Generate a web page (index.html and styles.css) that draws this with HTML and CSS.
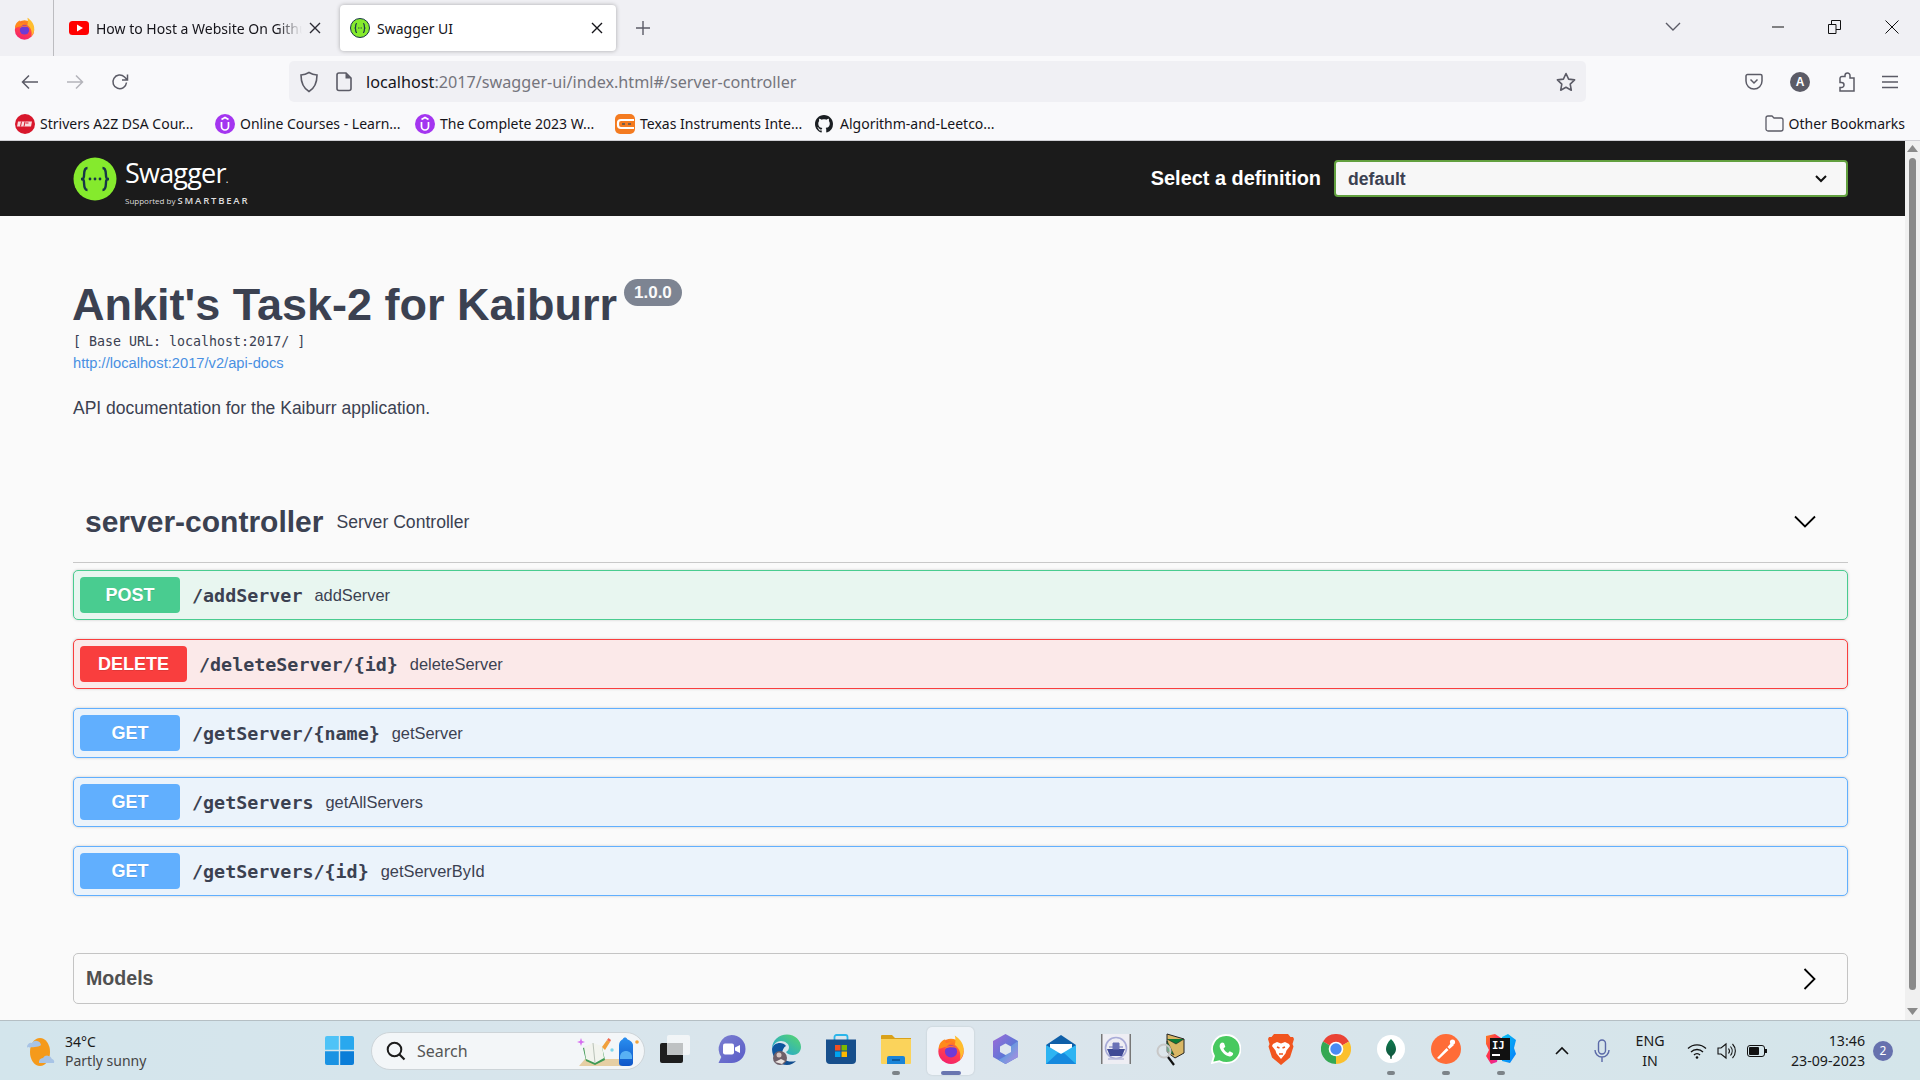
FILE: index.html
```html
<!DOCTYPE html>
<html lang="en">
<head>
  <meta charset="UTF-8">
  <meta name="viewport" content="width=device-width, initial-scale=1.0">
  <title>Swagger UI</title>
  <link rel="stylesheet" href="styles.css">
</head>
<body>

<!-- shared gradients and icons -->
<svg class="defs" width="0" height="0">
  <defs>
    <linearGradient id="ff-body" x1="0.7" y1="0" x2="0.3" y2="1"><stop offset="0" stop-color="#ff980e"/><stop offset="0.55" stop-color="#ff3d4f"/><stop offset="1" stop-color="#f3206e"/></linearGradient>
    <linearGradient id="edge-top" x1="0" y1="1" x2="1" y2="0"><stop offset="0" stop-color="#1b9de2"/><stop offset="1" stop-color="#5ad86a"/></linearGradient>
    <linearGradient id="edge-low" x1="0" y1="0" x2="1" y2="1"><stop offset="0" stop-color="#0c59a4"/><stop offset="1" stop-color="#114a8b"/></linearGradient>
    <linearGradient id="teams-fill" x1="0" y1="0" x2="1" y2="1"><stop offset="0" stop-color="#7b7fd0"/><stop offset="1" stop-color="#5a5cc8"/></linearGradient>
    <linearGradient id="m365-a" x1="0" y1="0" x2="1" y2="1"><stop offset="0" stop-color="#a06bd8"/><stop offset="1" stop-color="#2f7fd6"/></linearGradient>
    <linearGradient id="m365-b" x1="0" y1="0" x2="1" y2="1"><stop offset="0" stop-color="#2aa7de"/><stop offset="1" stop-color="#b78ae0"/></linearGradient>
    <linearGradient id="pack" x1="0" y1="0" x2="0" y2="1"><stop offset="0" stop-color="#2a8ff0"/><stop offset="1" stop-color="#0f56c8"/></linearGradient>
    <linearGradient id="leaf" x1="0" y1="0" x2="0" y2="1"><stop offset="0" stop-color="#0f7a4e"/><stop offset="1" stop-color="#12523c"/></linearGradient>
    <linearGradient id="ij-a" x1="0" y1="0" x2="1" y2="1"><stop offset="0" stop-color="#fc801d"/><stop offset="0.5" stop-color="#fe2857"/><stop offset="1" stop-color="#dd2bc7"/></linearGradient>
    <linearGradient id="ij-b" x1="0" y1="0" x2="1" y2="1"><stop offset="0" stop-color="#07c3f2"/><stop offset="1" stop-color="#087cfa"/></linearGradient>
    <symbol id="firefox" viewBox="0 0 32 32">
      <circle cx="16" cy="18" r="13.500" fill="url(#ff-body)"/>
      <path d="M20 1c5 3 9 8 9.500 14 .3 5-1 9-4 12 1-5 1-11-5.500-16 1-3 1-7 0-10z" fill="#ffbd2e"/>
      <path d="M2.800 15C3 10 6 6 10 5c-1 2 0 3 1 4 2-1 5-1 7 0-3 0-6 2-6 4-4 0-8 3-9.200 2z" fill="#ff8a1c"/>
      <circle cx="16" cy="18" r="6.500" fill="#6e3ad6"/>
      <path d="M9 15.500c2-4 10-5 14-.5-5-2-9-2-14 .5z" fill="#ff7139"/>
    </symbol>
    <symbol id="udemy" viewBox="0 0 20 20">
      <circle cx="10" cy="10" r="10" fill="#a435f0"/>
      <path d="M6.500 8v4.500a3.500 3.500 0 0 0 7 0V8M6.500 5.500L10 3.500l3.500 2" fill="none" stroke="#fff" stroke-width="1.700"/>
    </symbol>
  </defs>
</svg>

<!-- Browser tabs -->
<div class="tabbar">
  <div class="ff-slot">
    <svg width="23" height="25"><use href="#firefox"/></svg>
  </div>
  <div class="tab tab-bg">
    <svg class="tab-icon" width="20" height="14" viewBox="0 0 20 14"><rect width="20" height="14" rx="3.500" fill="#f00"/><path d="M8 3.500v7l6-3.500z" fill="#fff"/></svg>
    <span class="tab-title tab-fade">How to Host a Website On Github</span>
    <svg class="tab-close" width="14" height="14" viewBox="0 0 14 14"><path d="M2 2l10 10M12 2L2 12" stroke="#2b2a33" stroke-width="1.400"/></svg>
  </div>
  <div class="tab tab-active">
    <svg class="tab-icon" width="20" height="20" viewBox="0 0 20 20"><circle cx="10" cy="10" r="9.500" fill="#85ea2d" stroke="#173647"/><path d="M7 5.500c-2 0-1 3-1.500 4-.2.400-.5.500-1 .5.500 0 .8.100 1 .5.500 1-.5 4 1.500 4M13 5.500c2 0 1 3 1.500 4 .2.400.5.500 1 .5-.5 0-.8.100-1 .5-.5 1 .5 4-1.500 4" fill="none" stroke="#173647" stroke-width="1.200"/><path d="M8 10h.8M9.600 10h.8M11.200 10h.8" stroke="#173647" stroke-width="1.200"/></svg>
    <span class="tab-title">Swagger UI</span>
    <svg class="tab-close" width="14" height="14" viewBox="0 0 14 14"><path d="M2 2l10 10M12 2L2 12" stroke="#15141a" stroke-width="1.400"/></svg>
  </div>
  <svg class="new-tab" width="16" height="16" viewBox="0 0 16 16"><path d="M8 1v14M1 8h14" stroke="#5b5b66" stroke-width="1.400"/></svg>
  <div class="tabbar-right">
    <svg class="all-tabs" width="16" height="10" viewBox="0 0 16 10"><path d="M1 1l7 7 7-7" fill="none" stroke="#5b5b66" stroke-width="1.400"/></svg>
    <div class="win-btn"><svg width="12" height="2" viewBox="0 0 12 2"><path d="M0 1h12" stroke="#111" stroke-width="1"/></svg></div>
    <div class="win-btn"><svg width="13" height="14" viewBox="0 0 13 14"><path d="M.5 4.500h7.500v9H.5zM3.500 4.500V.5H12.500v9H8" fill="none" stroke="#111"/></svg></div>
    <div class="win-btn"><svg width="14" height="14" viewBox="0 0 14 14"><path d="M.5.500l13 13M13.500.500l-13 13" stroke="#111"/></svg></div>
  </div>
</div>

<!-- Address bar -->
<div class="toolbar">
  <div class="nav-btn"><svg width="18" height="16" viewBox="0 0 18 16"><path d="M17 8H2M8 1.500L1.500 8 8 14.500" fill="none" stroke="#5b5b66" stroke-width="1.500"/></svg></div>
  <div class="nav-btn"><svg width="18" height="16" viewBox="0 0 18 16"><path d="M1 8h15M10 1.500L16.500 8 10 14.500" fill="none" stroke="#b4b4ba" stroke-width="1.500"/></svg></div>
  <div class="nav-btn"><svg width="18" height="18" viewBox="0 0 18 18"><path d="M15.500 9.500A6.800 6.800 0 1 1 13.500 4L16 6.500M16.500 1.500v5.500H11" fill="none" stroke="#5b5b66" stroke-width="1.500"/></svg></div>
  <div class="urlbar">
    <svg class="url-shield" width="20" height="22" viewBox="0 0 20 22"><path d="M10 1.500c2.500 1.500 5 2.300 8 2.500 0 7-2 13-8 16.500C4 17 2 11 2 4c3-.2 5.500-1 8-2.500z" fill="none" stroke="#5b5b66" stroke-width="1.600"/></svg>
    <svg class="url-page" width="16" height="20" viewBox="0 0 16 20"><path d="M3 1h7l5 5v10.500a2 2 0 0 1-2 2H3a2 2 0 0 1-2-2V3a2 2 0 0 1 2-2z" fill="none" stroke="#5b5b66" stroke-width="1.600"/><path d="M9.500 1v5.500H15" fill="#5b5b66"/></svg>
    <span class="url-text"><span class="url-host">localhost</span>:2017/swagger-ui/index.html#/server-controller</span>
    <svg class="url-star" width="20" height="20" viewBox="0 0 20 20"><path d="M10 1.500l2.600 5.600 6 .8-4.400 4.200 1.100 6.100L10 15.200l-5.300 3 1.100-6.100L1.400 7.900l6-.8z" fill="none" stroke="#5b5b66" stroke-width="1.600" stroke-linejoin="round"/></svg>
  </div>
  <div class="tool-icons">
    <svg width="18" height="18" viewBox="0 0 18 18"><path d="M2.500 1.500h13a1.500 1.500 0 0 1 1.500 1.500v5a8 8 0 0 1-16 0V3a1.500 1.500 0 0 1 1.500-1.500z" fill="none" stroke="#5b5b66" stroke-width="1.500"/><path d="M5.500 6.500L9 10l3.500-3.500" fill="none" stroke="#5b5b66" stroke-width="1.500"/></svg>
    <div class="avatar">A</div>
    <svg width="18" height="20" viewBox="0 0 18 20"><path d="M8 4.500V3.500a2.500 2.500 0 1 1 5 0V6h4v13H3v-3.500h1.500a2.500 2.500 0 1 0 0-5H3V6.500a2 2 0 0 1 2-2z" fill="none" stroke="#5b5b66" stroke-width="1.500"/></svg>
    <svg width="16" height="14" viewBox="0 0 16 14"><path d="M0 1.500h16M0 7h16M0 12.500h16" stroke="#5b5b66" stroke-width="1.500"/></svg>
  </div>
</div>

<!-- Bookmarks -->
<div class="bookmarks">
  <div class="bm">
    <svg width="20" height="20" viewBox="0 0 20 20"><circle cx="10" cy="10" r="10" fill="#d8172c"/><path d="M3 7.500h14l-1 5H2z" fill="#fff" opacity=".85"/><path d="M6.500 7.500l-1 5M10 7.500l-1 5M13.500 9h-3" stroke="#d8172c"/></svg>
    <span>Strivers A2Z DSA Cour...</span>
  </div>
  <div class="bm">
    <svg width="20" height="20"><use href="#udemy"/></svg>
    <span>Online Courses - Learn...</span>
  </div>
  <div class="bm">
    <svg width="20" height="20"><use href="#udemy"/></svg>
    <span>The Complete 2023 W...</span>
  </div>
  <div class="bm">
    <svg width="20" height="20" viewBox="0 0 20 20"><rect width="20" height="20" rx="5" fill="#f47b20"/><path d="M19 6H6a3 3 0 0 0-3 3v2a3 3 0 0 0 3 3h13" fill="none" stroke="#fff" stroke-width="2.200"/><path d="M7 10h3M13 10h3" stroke="#555" stroke-width="1.600"/></svg>
    <span>Texas Instruments Inte...</span>
  </div>
  <div class="bm bm-git">
    <svg width="18" height="18" viewBox="0 0 16 16"><path fill="#1b1f23" d="M8 0C3.580 0 0 3.580 0 8c0 3.540 2.290 6.530 5.470 7.590.4.070.55-.17.55-.38 0-.19-.01-.82-.01-1.490-2.010.37-2.530-.49-2.690-.94-.09-.23-.48-.94-.82-1.130-.28-.15-.68-.52-.01-.53.63-.01 1.080.58 1.230.82.720 1.210 1.870.87 2.330.66.070-.52.280-.87.510-1.070-1.780-.2-3.640-.89-3.640-3.950 0-.87.310-1.590.820-2.150-.080-.2-.360-1.020.080-2.120 0 0 .670-.21 2.200.820.640-.180 1.320-.270 2-.270s1.360.090 2 .270c1.530-1.040 2.200-.820 2.200-.820.440 1.100.160 1.920.080 2.120.510.560.820 1.270.820 2.150 0 3.070-1.870 3.750-3.650 3.950.290.250.540.730.540 1.480 0 1.070-.010 1.930-.010 2.200 0 .210.150.460.550.380A8.010 8.010 0 0 0 16 8c0-4.420-3.580-8-8-8z"/></svg>
    <span>Algorithm-and-Leetco...</span>
  </div>
  <div class="bm bm-other">
    <svg width="19" height="17" viewBox="0 0 19 17"><path d="M1 3a2 2 0 0 1 2-2h4l2 2h7a2 2 0 0 1 2 2v9a2 2 0 0 1-2 2H3a2 2 0 0 1-2-2z" fill="none" stroke="#5b5b66" stroke-width="1.300"/></svg>
    <span>Other Bookmarks</span>
  </div>
</div>

<div class="page">
  <div class="page-main">

    <div class="topbar">
      <div class="logo">
        <svg width="44" height="44" viewBox="0 0 44 44"><circle cx="22" cy="22" r="21.500" fill="#85ea2d"/><path d="M14.500 11c-5 0-2.500 8-4 10-.5.600-1.200 1-2.500 1 1.300 0 2 .4 2.500 1 1.500 2-1 10 4 10M29.500 11c5 0 2.500 8 4 10 .5.600 1.200 1 2.500 1-1.300 0-2 .4-2.500 1-1.500 2 1 10-4 10" fill="none" stroke="#173647" stroke-width="2.400"/><circle cx="17" cy="22" r="1.400" fill="#173647"/><circle cx="22" cy="22" r="1.400" fill="#173647"/><circle cx="27" cy="22" r="1.400" fill="#173647"/></svg>
        <div class="logo-text">
          <div class="logo-name">Swagger<small>.</small></div>
          <div class="logo-sub">Supported by <b>SMARTBEAR</b></div>
        </div>
      </div>
      <div class="def-select">
        <label>Select a definition</label>
        <div class="select-box">
          <span>default</span>
          <svg width="14" height="10" viewBox="0 0 14 10"><path d="M2 2l5 5 5-5" fill="none" stroke="#111" stroke-width="2"/></svg>
        </div>
      </div>
    </div>

    <div class="content">
      <div class="info">
        <div class="title-row">
          <h1>Ankit's Task-2 for Kaiburr</h1>
          <span class="version">1.0.0</span>
        </div>
        <div class="base-url">[ Base URL: localhost:2017/ ]</div>
        <a class="docs-link" href="#">http://localhost:2017/v2/api-docs</a>
        <p class="desc">API documentation for the Kaiburr application.</p>
      </div>

      <div class="tag">
        <h2>server-controller</h2>
        <span class="tag-desc">Server Controller</span>
        <svg class="tag-arrow" width="22" height="14" viewBox="0 0 22 14"><path d="M1 1.500l10 10 10-10" fill="none" stroke="#000" stroke-width="1.800"/></svg>
      </div>

      <div class="op op-post">
        <span class="method">POST</span>
        <span class="path">/addServer</span>
        <span class="summary">addServer</span>
      </div>
      <div class="op op-delete">
        <span class="method">DELETE</span>
        <span class="path">/deleteServer/{id}</span>
        <span class="summary">deleteServer</span>
      </div>
      <div class="op op-get">
        <span class="method">GET</span>
        <span class="path">/getServer/{name}</span>
        <span class="summary">getServer</span>
      </div>
      <div class="op op-get">
        <span class="method">GET</span>
        <span class="path">/getServers</span>
        <span class="summary">getAllServers</span>
      </div>
      <div class="op op-get">
        <span class="method">GET</span>
        <span class="path">/getServers/{id}</span>
        <span class="summary">getServerById</span>
      </div>

      <div class="models">
        <span>Models</span>
        <svg width="14" height="22" viewBox="0 0 14 22"><path d="M1.500 1l10 10-10 10" fill="none" stroke="#000" stroke-width="1.800"/></svg>
      </div>
    </div>
  </div>

  <!-- Scrollbar -->
  <div class="scrollbar">
    <svg width="11" height="7" viewBox="0 0 11 7"><path d="M5.500 0L11 7H0z" fill="#8a8a8a"/></svg>
    <div class="scroll-thumb"></div>
    <svg width="11" height="7" viewBox="0 0 11 7"><path d="M5.500 7L11 0H0z" fill="#8a8a8a"/></svg>
  </div>
</div>

<!-- Windows taskbar -->
<div class="taskbar">
  <div class="weather">
    <svg width="32" height="32" viewBox="0 0 32 32"><ellipse cx="16" cy="17" rx="10" ry="14" fill="#f59a1b"/><path d="M3 12a4 4 0 0 1 5-4 5 5 0 0 1 9 2c-1 2-13 3-14 2z" fill="#a8c4e6"/><path d="M15 28a4 4 0 0 1 4-5 5 5 0 0 1 9 1 3 3 0 0 1 2 4z" fill="#a8c4e6"/></svg>
    <div class="weather-text">
      <div>34°C</div>
      <div class="weather-sub">Partly sunny</div>
    </div>
  </div>
  <div class="start">
    <svg width="29" height="29" viewBox="0 0 29 29"><path d="M0 2a2 2 0 0 1 2-2h11.800v13.800H0z" fill="#4fc3f7"/><path d="M15.200 0H27a2 2 0 0 1 2 2v11.800H15.200z" fill="#29a8ee"/><path d="M0 15.200h13.800V29H2a2 2 0 0 1-2-2z" fill="#1a93e3"/><path d="M15.200 15.200H29V27a2 2 0 0 1-2 2H15.200z" fill="#0a7dd8"/></svg>
  </div>
  <div class="search">
    <svg width="20" height="20" viewBox="0 0 20 20"><circle cx="8.500" cy="8.500" r="6.800" fill="none" stroke="#1c1c1c" stroke-width="2"/><path d="M13.500 13.500L18.500 18.500" stroke="#1c1c1c" stroke-width="2.200"/></svg>
    <span>Search</span>
    <svg class="search-art" width="62" height="32" viewBox="0 0 62 32">
      <path d="M8 24h38l6 7H2z" fill="#e6cfa4"/>
      <path d="M6 13l10-4 9 3 3 13-10 5-9-4z" fill="#3f9a54"/>
      <path d="M7 12l9-4 9 3 2 12-9 5-9-4z" fill="#f2f4ee"/>
      <path d="M16 8l2 20" stroke="#b9c2b8"/>
      <path d="M25 12l5-7 3 2-5 8z" fill="#f0a03c"/>
      <path d="M30 5l1.500-2 2.500 2-1 2z" fill="#ef6a50"/>
      <path d="M4 3l1 3 3 1-3 1-1 3-1-3-3-1 3-1z" fill="#d56ef0"/>
      <circle cx="35" cy="15" r="1.700" fill="#7fd6ea"/>
      <path d="M42 10c0-3 2-5 4-6 0-2 4-2 4 0 2 1 6 3 6 6v18c0 2-2 3-4 3h-6c-3 0-4-1-4-3z" fill="url(#pack)"/>
      <path d="M43 22c0-4 3-6 6-6s6 2 6 6v2H43z" fill="#58b0f4"/>
      <circle cx="60" cy="7" r="1.800" fill="#f3a53b"/>
    </svg>
  </div>

  <div class="task"><svg width="31" height="29" viewBox="0 0 31 29"><rect x="0" y="8" width="23" height="20" rx="2" fill="#1e1e1e"/><rect x="7" y="0" width="23" height="20" rx="2" fill="#f6f8f9" opacity=".85"/><path d="M9 8h14v10a2 2 0 0 1-2 2H7V10a2 2 0 0 1 2-2z" fill="#bfc2c3"/></svg></div>
  <div class="task"><svg width="30" height="30" viewBox="0 0 30 30"><path d="M15.500 1a14 14 0 0 1 0 28H2.500l2.800-6A14 14 0 0 1 15.500 1z" fill="url(#teams-fill)"/><rect x="7" y="9.500" width="11" height="11" rx="2" fill="#fff"/><path d="M19 13.500l5-2.500v8l-5-2.500z" fill="#fff"/></svg></div>
  <div class="task"><svg width="30" height="31" viewBox="0 0 30 31">
    <path d="M1 15C1 6 8 .5 16 .5c8 0 14 6 14 12.500 0 5-4 8-8 8-3 0-6-1-7-3 2-1 3-3 3-5 0-3-4-6-8-6C5 7 2 11 1 15z" fill="url(#edge-top)"/>
    <path d="M1 15c0 9 7 16 15 16 4 0 7-2 9-4-8 2-14-1-14-7 0-4 2-7 4-8-1-2-4-3-6-3C5 9 2 11 1 15z" fill="url(#edge-low)"/>
    <circle cx="9" cy="24" r="7" fill="#6e5f68"/><circle cx="8" cy="21" r="2.500" fill="#d6c5c2"/><path d="M4 28l6-3 4 2-3 3z" fill="#e9e3e0"/>
  </svg></div>
  <div class="task"><svg width="30" height="30" viewBox="0 0 30 30"><path d="M8.500 6V3a2 2 0 0 1 2-2h9a2 2 0 0 1 2 2v3" fill="none" stroke="#2bb5ea" stroke-width="1.800"/><path d="M0 5.500h30V26a4 4 0 0 1-4 4H4a4 4 0 0 1-4-4z" fill="#174f8c"/><rect x="9" y="11" width="5.500" height="5.500" fill="#f25022"/><rect x="15.500" y="11" width="5.500" height="5.500" fill="#7fba00"/><rect x="9" y="17.500" width="5.500" height="5.500" fill="#00a4ef"/><rect x="15.500" y="17.500" width="5.500" height="5.500" fill="#ffb900"/></svg></div>
  <div class="task task-open"><svg width="30" height="30" viewBox="0 0 30 30"><path d="M0 2a1 1 0 0 1 1-1h10l3 3h16v6H0z" fill="#d9a11a"/><path d="M0 5h30v24a1 1 0 0 1-1 1H1a1 1 0 0 1-1-1z" fill="#fbd35b"/><path d="M6 24a2 2 0 0 1 2-2h14a2 2 0 0 1 2 2v6H6z" fill="#1a84d8"/><path d="M11 26h8" stroke="#0b4f8c" stroke-width="1.500"/></svg></div>
  <div class="task task-active"><svg width="30" height="31"><use href="#firefox"/></svg></div>
  <div class="task"><svg width="27" height="30" viewBox="0 0 27 30">
    <path d="M13.500 0L26 7v16l-12.500 7L1 23V7z" fill="url(#m365-a)"/>
    <path d="M26 7v16l-12.500 7-7-4 7-4v-6z" fill="url(#m365-b)"/>
    <path d="M13.500 9.500l5.500 3v5.500l-5.500 3-5.500-3v-5.500z" fill="#dfe7ef"/>
  </svg></div>
  <div class="task"><svg width="30" height="29" viewBox="0 0 30 29"><path d="M15 0l15 10v3H0v-3z" fill="#0f5fa8"/><path d="M4 9h22v8l-11 6-11-6z" fill="#fff"/><path d="M0 10l15 9 15-9v19H0z" fill="#2db4f2"/><path d="M0 29l30 0-12-11-3 1-3-1z" fill="#1689de"/></svg></div>
  <div class="task"><svg width="30" height="30" viewBox="0 0 30 30"><rect width="30" height="30" fill="#eeeef4"/><rect width="1.500" height="30" fill="#777"/><rect x="28.500" width="1.500" height="30" fill="#777"/><circle cx="15" cy="14" r="10.500" fill="none" stroke="#a9acd8" stroke-width="1.600"/><path d="M6 15h18l-3 7H9z" fill="#3f4a96"/><path d="M12 9h6v6h-6zM8 13h14" fill="#6a72b6" stroke="#6a72b6"/><path d="M7 25h16" stroke="#b9bbdc" stroke-width="1.500"/></svg></div>
  <div class="task"><svg width="30" height="33" viewBox="0 0 30 33"><path d="M11 1l17 5v14l-9 5-8-6z" fill="#d9b765" stroke="#222"/><path d="M11 6l9 5 8-5M11 8l7 14-7-4z" fill="#0c7c35" stroke="#222" stroke-width=".6"/><circle cx="8" cy="18" r="6.500" fill="#dfe6e8" fill-opacity=".5" stroke="#c8c8c8" stroke-width="2"/><path d="M12 24l6 8" stroke="#111" stroke-width="2.200"/></svg></div>
  <div class="task"><svg width="30" height="30" viewBox="0 0 30 30"><path d="M15.500 1a14 14 0 0 1 0 28c-2.500 0-5-.7-7-1.800L1 29l2-7A14 14 0 0 1 15.500 1z" fill="#48c95f" stroke="#fff" stroke-width="1.800"/><path d="M11 8.500c-2 .5-3 3-2 5.500 2 5 5.500 7.500 9.500 8.500 2 0 4-1.500 3.500-3.500l-3.300-1.700-1.700 1.800c-2-1-3.500-2.500-4.500-4.600l1.800-1.700-1.300-3.800z" fill="#fff"/></svg></div>
  <div class="task"><svg width="26" height="31" viewBox="0 0 26 31"><path d="M6 0h14l2.500 3H25l1 2-1.500 5 1 2.500-3.500 11-9 7.500-9-7.500-3.500-11 1-2.500L0 5l1-2h2.500z" fill="#f1551f"/><path d="M5 10l4-2 4 1.500L17 8l4 2 1 2-3.500 4.500-1 3L13 25l-4.500-5.500-1-3L4 12z" fill="#fff"/><path d="M9 13l2.500 1M17 13l-2.500 1M11 20h4" stroke="#f1551f" stroke-width="1.500"/></svg></div>
  <div class="task"><svg width="30" height="30" viewBox="0 0 30 30">
    <path d="M15 15L2 7.500A15 15 0 0 1 28 7.500z" fill="#ea4335"/>
    <path d="M15 15L28 7.500A15 15 0 0 1 15 30z" fill="#fbc02d"/>
    <path d="M15 15V30A15 15 0 0 1 2 7.500z" fill="#34a853"/>
    <circle cx="15" cy="15" r="7.300" fill="#fff"/><circle cx="15" cy="15" r="5.700" fill="#4a8af4"/>
  </svg></div>
  <div class="task task-open"><svg width="28" height="28" viewBox="0 0 28 28"><circle cx="14" cy="14" r="14" fill="#fff"/><path d="M14 4c3.500 3.500 5 7 5 10 0 3.500-2.500 6-4 7l-.5 3h-1l-.5-3c-1.500-1-4-3.500-4-7 0-3 1.500-6.500 5-10z" fill="url(#leaf)"/></svg></div>
  <div class="task task-open"><svg width="30" height="30" viewBox="0 0 30 30"><circle cx="15" cy="15" r="15" fill="#ff6c37"/><path d="M6 24l9.500-10 2 2L8 25zM16.500 13l4-4.500 2.500 2.500-4.500 4z" fill="#fff"/><circle cx="21.500" cy="8" r="2.600" fill="#fff"/></svg></div>
  <div class="task task-open">
    <div class="ij">
      <svg class="ij-bg" width="31" height="30" viewBox="0 0 31 30"><path d="M1 2l9-2 6 4-4 24-6 2-5-8 3-6-3-6z" fill="url(#ij-a)"/><path d="M17 3l6-3 8 6-2 8 2 6-6 9-8-2z" fill="url(#ij-b)"/></svg>
      <div class="ij-box"><span>IJ</span><i></i></div>
    </div>
  </div>

  <div class="tray">
    <div class="tray-item tray-up"><svg width="14" height="9" viewBox="0 0 14 9"><path d="M1 8l6-6 6 6" fill="none" stroke="#111" stroke-width="1.600"/></svg></div>
    <div class="tray-item tray-mic"><svg width="16" height="24" viewBox="0 0 16 24"><rect x="4.500" y="1" width="7" height="14" rx="3.500" fill="none" stroke="#5b6aa8" stroke-width="1.400"/><path d="M1 11a7 7 0 0 0 14 0M8 18v5" fill="none" stroke="#5b6aa8" stroke-width="1.400"/></svg></div>
    <div class="tray-item tray-lang">ENG<br>IN</div>
    <div class="tray-item tray-wifi"><svg width="20" height="16" viewBox="0 0 20 16"><path d="M1 5.500a13 13 0 0 1 18 0M4 9a8.500 8.500 0 0 1 12 0M7 12a4 4 0 0 1 6 0" fill="none" stroke="#111" stroke-width="1.300"/><circle cx="10" cy="14.500" r="1.300" fill="#111"/></svg></div>
    <div class="tray-item tray-sound"><svg width="20" height="18" viewBox="0 0 20 18"><path d="M1 6h3l5-4v14l-5-4H1z" fill="none" stroke="#111" stroke-width="1.100"/><path d="M11.500 6.500a4 4 0 0 1 0 5M13.500 4.500a7 7 0 0 1 0 9M15.500 2a10 10 0 0 1 0 14" fill="none" stroke="#111" stroke-width="1.100"/></svg></div>
    <div class="tray-item tray-batt"><svg width="20" height="12" viewBox="0 0 20 12"><rect x=".5" y=".5" width="17" height="11" rx="2.500" fill="none" stroke="#111"/><rect x="2" y="2" width="10" height="8" rx="1" fill="#111"/><rect x="18" y="4" width="2" height="4" fill="#111"/></svg></div>
    <div class="clock">13:46<br>23-09-2023</div>
    <div class="notif">2</div>
  </div>
</div>

</body>
</html>
```

FILE: styles.css
```css
* {
  box-sizing: border-box;
}

body {
  margin: 0;
  height: 100vh;
  overflow: hidden;
  display: flex;
  flex-direction: column;
  font-family: 'Liberation Sans', Arial, sans-serif;
  background-color: #fafafa;
  color: #3b4151;
}

.defs {
  display: block;
  height: 0;
}

/* Browser tabs */
.tabbar {
  height: 56px;
  flex-shrink: 0;
  background-color: #f0f0f4;
  display: flex;
  align-items: flex-start;
  font-family: 'Noto Sans', sans-serif;
  font-size: 14px;
  color: #15141a;
}

.ff-slot {
  width: 54px;
  height: 56px;
  border-right: 1px solid #bcbcc0;
  display: flex;
  align-items: center;
  justify-content: center;
  padding-right: 5px;
}

.tab {
  height: 46px;
  margin-top: 5px;
  display: flex;
  align-items: center;
  border-radius: 4px;
}

.tab-bg {
  width: 276px;
  margin-left: 10px;
  padding: 0 18px 0 5px;
}

.tab-active {
  width: 276px;
  background-color: #fff;
  box-shadow: 0 0 4px rgba(0, 0, 0, 0.3);
  padding: 0 12px 0 10px;
}

.tab-icon {
  flex-shrink: 0;
  margin-right: 7px;
}

.tab-title {
  flex: 1;
  white-space: nowrap;
  overflow: hidden;
}

.tab-fade {
  -webkit-mask-image: linear-gradient(to right, #000 88%, transparent);
  mask-image: linear-gradient(to right, #000 88%, transparent);
}

.tab-close {
  flex-shrink: 0;
  margin-left: 6px;
}

.new-tab {
  margin: 20px 0 0 19px;
}

.tabbar-right {
  margin-left: auto;
  display: flex;
  align-items: center;
  height: 56px;
  padding-bottom: 2px;
}

.all-tabs {
  margin-right: 68px;
}

.win-btn {
  width: 57px;
  display: flex;
  justify-content: center;
}

/* Address bar */
.toolbar {
  height: 51px;
  flex-shrink: 0;
  background-color: #f9f9fb;
  display: flex;
  align-items: center;
  padding-left: 7px;
}

.nav-btn {
  width: 45px;
  display: flex;
  justify-content: center;
}

.urlbar {
  width: 1297px;
  height: 41px;
  margin-left: 147px;
  background-color: #f0f0f4;
  border-radius: 5px;
  display: flex;
  align-items: center;
  padding: 0 10px;
  font-family: 'Noto Sans', sans-serif;
  font-size: 16.200px;
  color: #75757d;
}

.url-shield {
  margin-right: 17px;
}

.url-page {
  margin-right: 14px;
}

.url-host {
  color: #15141a;
}

.url-star {
  margin-left: auto;
}

.tool-icons {
  display: flex;
  align-items: center;
  margin-left: 159px;
  gap: 27px;
}

.avatar {
  width: 20px;
  height: 20px;
  border-radius: 50%;
  background-color: #5b5b66;
  color: #fff;
  font-size: 12px;
  font-weight: bold;
  text-align: center;
  line-height: 20px;
}

/* Bookmarks */
.bookmarks {
  height: 34px;
  flex-shrink: 0;
  background-color: #f9f9fb;
  border-bottom: 1px solid #cfcfd4;
  display: flex;
  align-items: center;
  padding-left: 15px;
  font-family: 'Noto Sans', sans-serif;
  font-size: 14px;
  color: #15141a;
}

.bm {
  display: flex;
  align-items: center;
  gap: 5px;
  width: 200px;
  white-space: nowrap;
}

.bm-git {
  gap: 7px;
}

.bm-other {
  margin-left: auto;
  width: auto;
  padding-right: 15px;
}

/* Page area */
.page {
  flex: 1;
  display: flex;
  min-height: 0;
}

.page-main {
  flex: 1;
  display: flex;
  flex-direction: column;
}

.topbar {
  height: 75px;
  background-color: #1b1b1b;
  display: flex;
  align-items: center;
  justify-content: space-between;
  padding: 0 57px 0 73px;
}

.logo {
  display: flex;
  align-items: center;
  gap: 8px;
  color: #fff;
}

.logo-text {
  padding-top: 5px;
}

.logo-name {
  font-family: 'Open Sans', sans-serif;
  font-weight: 400;
  font-size: 27px;
  line-height: 33px;
  letter-spacing: -0.8px;
}

.logo-name small {
  font-size: 10px;
}

.logo-sub {
  font-size: 8px;
  line-height: 10px;
  font-family: 'Open Sans', sans-serif;
  color: #ddd;
}

.logo-sub b {
  font-size: 9.500px;
  letter-spacing: 1.800px;
  font-weight: 600;
}

.def-select {
  display: flex;
  align-items: center;
  gap: 13px;
}

.def-select label {
  color: #fff;
  font-weight: bold;
  font-size: 19.900px;
}

.select-box {
  width: 514px;
  height: 37px;
  background-color: #f7f7f7;
  border: 2px solid #62a03f;
  border-radius: 4px;
  display: flex;
  align-items: center;
  justify-content: space-between;
  padding: 1px 18px 0 12px;
  font-weight: bold;
  font-size: 17.600px;
}

.content {
  flex: 1;
  padding: 0 57px 0 73px;
}

.info {
  padding-top: 63px;
}

.title-row {
  display: flex;
  align-items: flex-start;
}

.title-row h1 {
  margin: 0 0 0 -1px;
  font-size: 45px;
  line-height: 51px;
  font-weight: bold;
}

.version {
  margin-left: 7px;
  height: 27px;
  padding: 0 10px;
  background-color: #7d8492;
  border-radius: 14px;
  color: #fafafa;
  font-size: 17px;
  font-weight: bold;
  line-height: 27px;
}

.base-url {
  margin-top: 2px;
  font-family: 'DejaVu Sans Mono', monospace;
  font-size: 13.300px;
  line-height: 20px;
}

.docs-link {
  display: block;
  margin-top: 1px;
  font-size: 14.700px;
  line-height: 20px;
  color: #4990e2;
  text-decoration: none;
}

.desc {
  margin: 24px 0 0;
  font-size: 17.500px;
  line-height: 22px;
}

.tag {
  margin-top: 74px;
  height: 70px;
  border-bottom: 1px solid #c8c8c8;
  display: flex;
  align-items: center;
  padding: 0 32px 11px 12px;
}

.tag h2 {
  margin: 0;
  font-size: 30px;
  font-weight: bold;
}

.tag-desc {
  margin-left: 13px;
  font-size: 17.600px;
}

.tag-arrow {
  margin-left: auto;
}

.op {
  height: 50px;
  margin-top: 19px;
  display: flex;
  align-items: center;
  padding: 0 6px;
  border: 1px solid;
  border-radius: 5px;
  box-shadow: 0 0 3px rgba(0, 0, 0, 0.19);
}

.tag + .op {
  margin-top: 7px;
}

.method {
  min-width: 100px;
  height: 36px;
  padding: 0 18px;
  border-radius: 4px;
  color: #fff;
  font-size: 18px;
  font-weight: bold;
  text-align: center;
  line-height: 37px;
  text-shadow: 0 1px 0 rgba(0, 0, 0, 0.1);
}

.path {
  margin-left: 12px;
  font-family: 'DejaVu Sans Mono', monospace;
  font-size: 18.350px;
  font-weight: bold;
}

.summary {
  margin-left: 12px;
  font-size: 16.400px;
}

.op-post {
  background-color: #e8f6f0;
  border-color: #49cc90;
}

.op-post .method {
  background-color: #49cc90;
}

.op-delete {
  background-color: #fbe9e9;
  border-color: #f93e3e;
}

.op-delete .method {
  background-color: #f93e3e;
}

.op-get {
  background-color: #ebf3fb;
  border-color: #61affe;
}

.op-get .method {
  background-color: #61affe;
}

.models {
  margin-top: 57px;
  height: 51px;
  border: 1px solid #c4c4c4;
  border-radius: 5px;
  display: flex;
  align-items: center;
  justify-content: space-between;
  padding: 0 30px 0 12px;
  font-size: 19.600px;
  font-weight: bold;
  color: #505050;
}

/* Scrollbar */
.scrollbar {
  width: 15px;
  display: flex;
  flex-direction: column;
  align-items: center;
  padding: 4px 0 5px;
  background-color: #f0f0f0;
}

.scroll-thumb {
  flex: 1;
  width: 7px;
  margin: 6px 0 18px;
  background-color: #8a8a8a;
  border-radius: 4px;
}

/* Windows taskbar */
.taskbar {
  height: 60px;
  flex-shrink: 0;
  display: flex;
  align-items: center;
  border-top: 1px solid #b5bfc4;
  background: linear-gradient(to right, #d3e5ec, #dbe5ec 50%, #d4e5ea);
  font-family: 'Noto Sans', sans-serif;
  color: #1a1a1a;
}

.weather {
  width: 325px;
  display: flex;
  align-items: center;
  padding-left: 24px;
  gap: 9px;
  font-size: 14px;
  line-height: 19px;
}

.weather-sub {
  color: #444;
}

.start {
  width: 46px;
  display: flex;
}

.search {
  width: 274px;
  height: 38px;
  margin-right: 3px;
  display: flex;
  align-items: center;
  background-color: #f3f6f8;
  border: 1px solid #cdd4d8;
  border-radius: 19px;
  padding-left: 14px;
  font-size: 16px;
  color: #555;
  gap: 11px;
}

.search-art {
  margin-left: auto;
  margin-right: 5px;
}

.task {
  position: relative;
  width: 55px;
  height: 48px;
  flex-shrink: 0;
  display: flex;
  align-items: center;
  justify-content: center;
  padding-bottom: 3px;
  border-radius: 5px;
}

.task-open::after,
.task-active::after {
  content: "";
  position: absolute;
  bottom: 0;
  left: 24px;
  width: 8px;
  height: 4px;
  border-radius: 2px;
  background-color: #7c8388;
}

.task-active {
  background-color: #eef3f8;
  box-shadow: 0 0 2px rgba(0, 0, 0, 0.15);
  width: 47px;
  margin: 0 4px;
}

.task-active::after {
  left: 14px;
  width: 20px;
  background-color: #6a76b0;
}

.ij {
  position: relative;
  width: 31px;
  height: 30px;
}

.ij-bg {
  display: block;
}

/* black tile sits over the coloured backdrop */
.ij-box {
  position: absolute;
  left: 5px;
  top: 4px;
  width: 20px;
  height: 22px;
  background-color: #111;
  color: #fff;
  font-size: 10.500px;
  font-weight: bold;
  font-family: 'DejaVu Sans Mono', monospace;
  line-height: 12px;
  padding: 1px 2px;
}

.ij-box span {
  display: block;
}

.ij-box i {
  display: block;
  width: 8px;
  height: 2px;
  margin-top: 3px;
  background-color: #fff;
}

.tray {
  display: flex;
  align-items: center;
  margin-left: 11px;
  font-size: 14.200px;
  line-height: 20px;
}

.tray-item {
  display: flex;
  align-items: center;
  justify-content: center;
}

.tray-up { width: 46px; }
.tray-mic { width: 34px; }
.tray-lang { width: 62px; text-align: center; }
.tray-wifi { width: 31px; }
.tray-sound { width: 29px; }
.tray-batt { width: 32px; }

.clock {
  width: 92px;
  text-align: right;
  white-space: nowrap;
}

.notif {
  width: 20px;
  height: 20px;
  margin-left: 8px;
  border-radius: 50%;
  background-color: #6671ae;
  color: #fff;
  font-size: 12px;
  text-align: center;
}
```
